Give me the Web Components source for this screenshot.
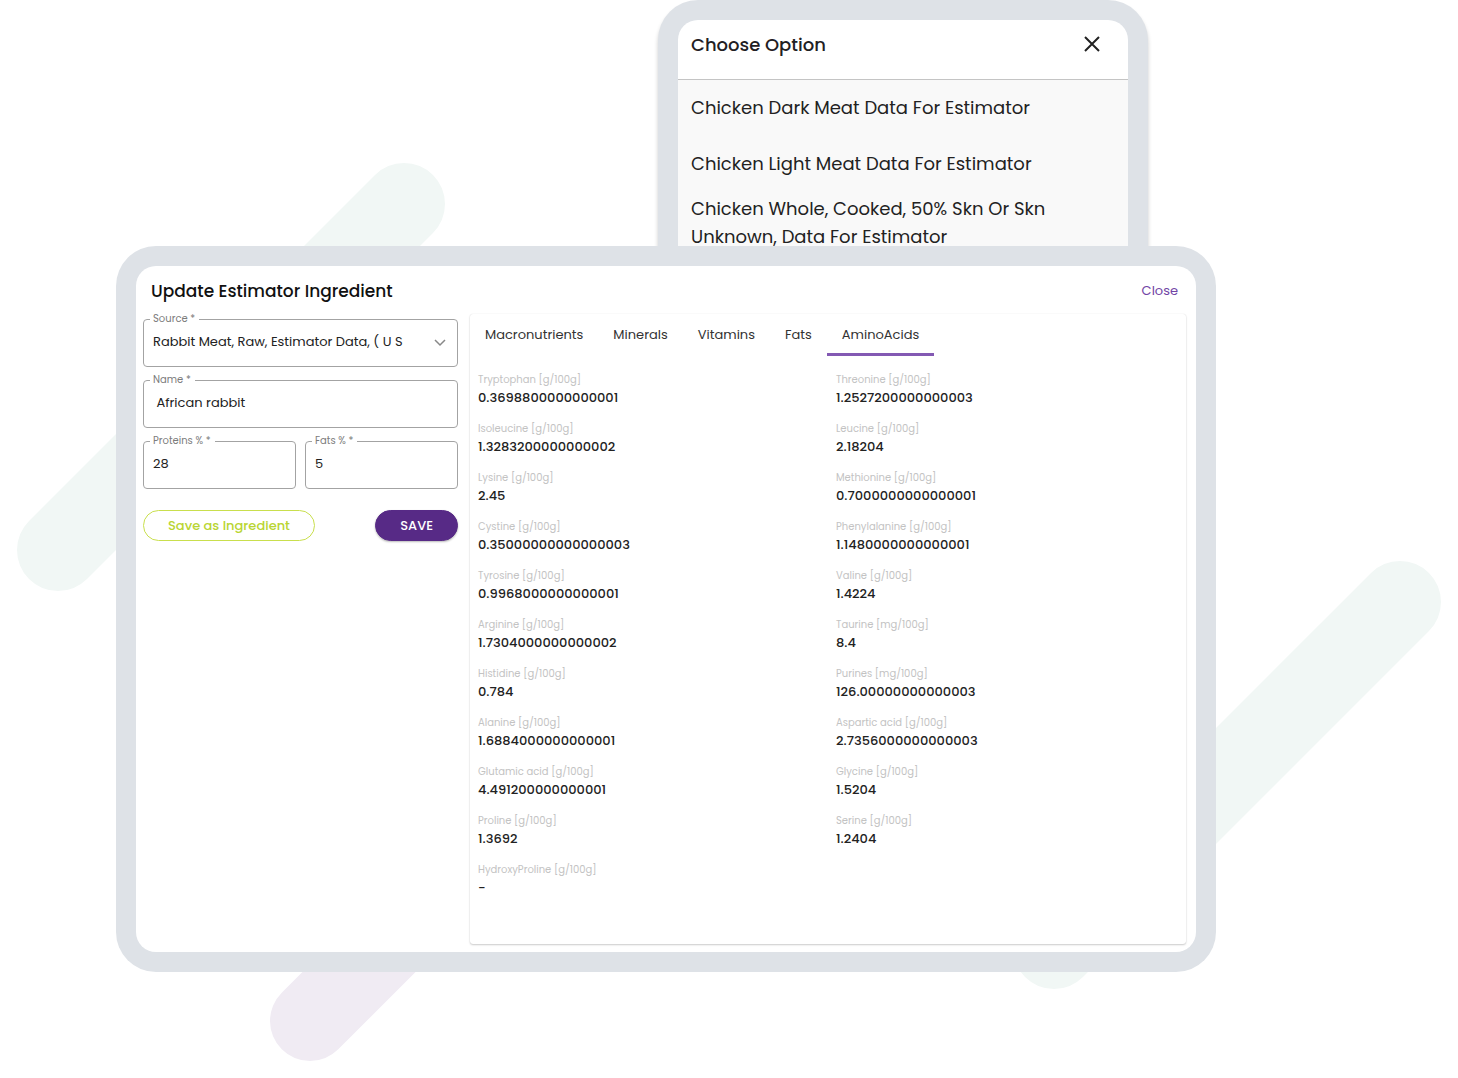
<!DOCTYPE html>
<html lang="en">
<head>
<meta charset="utf-8">
<meta name="viewport" content="width=device-width, initial-scale=1">
<title>Update Estimator Ingredient</title>
<style>
body{margin:0;background:#fff;color:#222;font-family:Poppins,Inter,"Noto Sans",sans-serif;font-size:13px}
</style>
</head>
<body>
<estimator-page></estimator-page>
<script>
const define = (name, html, setup) => {
  const tpl = document.createElement('template');
  tpl.innerHTML = '<style>*{box-sizing:border-box}</style>' + html;
  customElements.define(name, class extends HTMLElement {
    constructor() {
      super();
      this.attachShadow({mode: 'open'}).append(tpl.content.cloneNode(true));
    }
    connectedCallback() { if (setup) setup(this, this.shadowRoot); }
  });
};

define('backdrop-bars', `
<style>:host{display:block}svg{display:block;width:100%;height:auto}</style>
<svg viewBox="0 0 1458 1078" fill="none" stroke-linecap="round" stroke-width="82" aria-hidden="true">
  <path d="M58 550 404 204M1054 948 1400 602" stroke="#f1f7f5"/>
  <path d="M310 1021 460 871" stroke="#f0ebf3" stroke-width="80"/>
</svg>`);

define('device-frame', `
<style>
:host{display:block;background:#dee2e7;border-radius:40px;padding:20px}
div{background:#fff;border-radius:20px;overflow:hidden}
</style><div><slot></slot></div>`);

define('option-sheet', `
<style>
:host{display:block}
header{display:flex;justify-content:space-between;align-items:flex-start;height:60px;padding:12px 24px 0 13px;border-bottom:1px solid #c4c4c4}
h2{margin:0;font-size:18px;line-height:26px;font-weight:500;color:#1f2023}
button{border:0;background:none;padding:2px;line-height:0;cursor:pointer}
ul{list-style:none;margin:0;padding:0 0 16px;background:#f9f9f9}
</style>
<header><h2><slot name="title"></slot></h2>
<button type="button" aria-label="Dismiss"><svg width="20" height="20" viewBox="0 0 20 20" fill="none" stroke="#222" stroke-width="2"><path d="M3 3 17 17M17 3 3 17"/></svg></button></header>
<ul><slot></slot></ul>`);

define('option-item', `
<style>
:host{display:block}
li{display:flex;align-items:center;min-height:56px;padding:3px 13px;font-size:18px;line-height:28px;color:#222}
</style><li><span><slot></slot></span></li>`);

define('outline-field', `
<style>
:host{display:block;flex:1;min-width:0}
fieldset{margin:0;min-width:0;border:1px solid #a3a3a3;border-radius:4px;padding:0 9px 8px}
legend{margin-left:-3px;padding:0 4px 0 3px;font-size:10px;line-height:12px;color:#7c7c7c}
label{display:block}
.control{display:grid;align-items:center;height:33px}
input,select{grid-area:1/1;width:100%;height:33px;margin:0;padding:0;border:0;outline:0;background:none;appearance:none;font:inherit;font-size:13px;color:#222;min-width:0}
select{padding-right:36px}
svg{grid-area:1/1;justify-self:end;pointer-events:none}
</style>
<fieldset><legend><label for="c"></label></legend><div class="control"></div></fieldset>`,
(host, root) => {
  root.querySelector('label').textContent = host.getAttribute('label') + ' *';
  const box = root.querySelector('.control');
  const value = host.getAttribute('value');
  if (host.hasAttribute('choice')) {
    box.innerHTML = '<select id="c"><option></option></select><svg width="16" height="16" viewBox="0 0 16 16" fill="none" stroke="#888" stroke-width="1.5"><path d="M3 6 8 11 13 6"/></svg>';
    box.querySelector('option').textContent = value;
  } else {
    box.innerHTML = '<input id="c" type="text">';
    box.firstChild.value = value;
  }
});

define('pill-button', `
<style>
:host{display:block}
button{height:31px;padding:0 24px;border-radius:16px;border:1px solid #c9df4d;background:#fff;color:#b9d532;font:inherit;font-size:13px;font-weight:500;cursor:pointer}
:host([primary]) button{background:#572a86;border-color:#572a86;color:#fff;box-shadow:0 1px 2px #0004}
</style><button type="button"><slot></slot></button>`);

define('estimator-form', `
<style>
form{display:flex;flex-direction:column;gap:7px}
.row{display:flex;gap:9px}
.actions{display:flex;justify-content:space-between;padding-top:14px}
</style>
<form>
<outline-field choice label="Source" value="Rabbit Meat, Raw, Estimator Data, ( U S"></outline-field>
<outline-field label="Name" value=" African rabbit"></outline-field>
<div class="row"><outline-field label="Proteins %" value="28"></outline-field><outline-field label="Fats %" value="5"></outline-field></div>
<div class="actions"><pill-button>Save as Ingredient</pill-button><pill-button primary>SAVE</pill-button></div>
</form>`);

define('nutrient-tabs', `
<style>
:host{display:block}
nav{display:flex}
button{height:42px;padding:2px 15px 0;border:0;border-bottom:3px solid transparent;background:none;font:inherit;font-size:13px;color:#333;cursor:pointer}
button[aria-selected=true]{border-color:#8359b3}
</style><nav role="tablist"></nav>`,
(host, root) => {
  const nav = root.querySelector('nav');
  for (const name of ['Macronutrients', 'Minerals', 'Vitamins', 'Fats', 'AminoAcids']) {
    const b = document.createElement('button');
    b.type = 'button';
    b.setAttribute('role', 'tab');
    b.setAttribute('aria-selected', name === 'AminoAcids');
    b.textContent = name;
    nav.append(b);
  }
});

define('nutrient-value', `
<style>
:host{display:block;padding-left:8px}
dl,dt,dd{margin:0}
dt{font-size:10px;line-height:16px;color:#c3c3c3}
dd{font-size:13px;line-height:20px;font-weight:500;color:#222}
</style><dl><dt><slot name="name"></slot></dt><dd><slot></slot></dd></dl>`);

define('amino-panel', `
<style>
:host{display:block;background:#fff;border-radius:3px;box-shadow:0 1px 2px #0003,0 0 1px #0002}
.grid{display:grid;grid-template-columns:1fr 1fr;row-gap:13px;padding:16px 0 46px}
</style>
<nutrient-tabs></nutrient-tabs><div class="grid"></div>`,
(host, root) => {
  const data = [
    ['Tryptophan', '0.3698800000000001'], ['Threonine', '1.2527200000000003'],
    ['Isoleucine', '1.3283200000000002'], ['Leucine', '2.18204'],
    ['Lysine', '2.45'], ['Methionine', '0.7000000000000001'],
    ['Cystine', '0.35000000000000003'], ['Phenylalanine', '1.1480000000000001'],
    ['Tyrosine', '0.9968000000000001'], ['Valine', '1.4224'],
    ['Arginine', '1.7304000000000002'], ['Taurine', '8.4', 'mg'],
    ['Histidine', '0.784'], ['Purines', '126.00000000000003', 'mg'],
    ['Alanine', '1.6884000000000001'], ['Aspartic acid', '2.7356000000000003'],
    ['Glutamic acid', '4.491200000000001'], ['Glycine', '1.5204'],
    ['Proline', '1.3692'], ['Serine', '1.2404'],
    ['HydroxyProline', '-']
  ];
  root.querySelector('.grid').innerHTML = data.map(([n, v, u = 'g']) =>
    `<nutrient-value><span slot="name">${n} [${u}/100g]</span>${v}</nutrient-value>`).join('');
});

define('ingredient-dialog', `
<style>
:host{display:block}
header{display:flex;justify-content:space-between;align-items:center;height:47px;padding:2px 18px 0 15px}
h1{margin:0;font-size:17px;line-height:24px;font-weight:500;color:#111}
a{font-size:13px;color:#7144a5;text-decoration:none}
.body{display:grid;grid-template-columns:minmax(240px,315px) 1fr;gap:12px;padding:0 10px 8px 7px}
amino-panel{margin-top:1px}
</style>
<header><h1>Update Estimator Ingredient</h1><a href="#">Close</a></header>
<div class="body"><estimator-form></estimator-form><amino-panel></amino-panel></div>`);

define('estimator-page', `
<style>
:host{display:block;position:relative;overflow:hidden}
backdrop-bars{position:absolute;inset:0 0 auto}
main{position:relative;display:flex;flex-direction:column;padding:0 242px 106px 116px}
.sheet{align-self:flex-end;width:490px;margin-right:68px;padding-bottom:0;border-radius:40px 40px 0 0;box-shadow:0 4px 4px #0003}
.dialog{position:relative;margin-top:-24px}
</style>
<backdrop-bars></backdrop-bars>
<main>
<device-frame class="sheet"><option-sheet><span slot="title">Choose Option</span>
<option-item>Chicken Dark Meat Data For Estimator</option-item>
<option-item>Chicken Light Meat Data For Estimator</option-item>
<option-item>Chicken Whole, Cooked, 50% Skn Or Skn Unknown, Data For Estimator</option-item>
</option-sheet></device-frame>
<device-frame class="dialog"><ingredient-dialog></ingredient-dialog></device-frame>
</main>`);
</script>
</body>
</html>
